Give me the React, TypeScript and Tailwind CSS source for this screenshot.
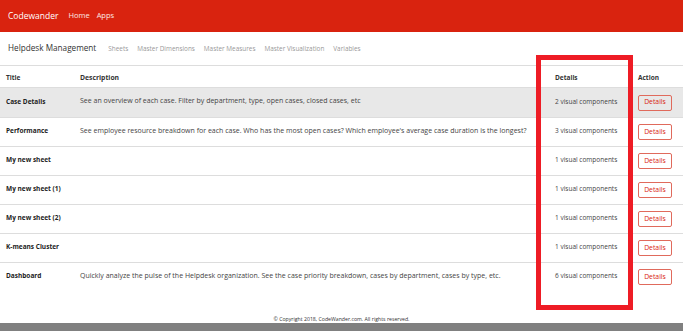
import React from 'react';

const sheets = [
  {
    title: 'Case Details',
    description: 'See an overview of each case. Filter by department, type, open cases, closed cases, etc',
    count: 2,
  },
  {
    title: 'Performance',
    description:
      "See employee resource breakdown for each case. Who has the most open cases? Which employee's average case duration is the longest?",
    count: 3,
  },
  { title: 'My new sheet', description: '', count: 1 },
  { title: 'My new sheet (1)', description: '', count: 1 },
  { title: 'My new sheet (2)', description: '', count: 1 },
  { title: 'K-means Cluster', description: '', count: 1 },
  {
    title: 'Dashboard',
    description:
      'Quickly analyze the pulse of the Helpdesk organization. See the case priority breakdown, cases by department, cases by type, etc.',
    count: 6,
  },
];

const cols = 'grid grid-cols-[74px_475px_83px_1fr] px-[6px]';

export default function App() {
  return (
    <div className="relative w-[683px] h-[331px] overflow-hidden bg-white font-['Open_Sans',sans-serif] text-[#333]">
      {/* Navbar */}
      <div className="h-[32px] bg-[#d9230f] flex items-center px-[8px] gap-[10px]">
        <span className="text-white text-[8.5px] leading-none">Codewander</span>
        <div className="flex gap-[7px] text-[7.5px] text-white/90">
          <span>Home</span>
          <span>Apps</span>
        </div>
      </div>

      {/* Sub nav */}
      <div className="h-[34px] border-b border-[#ddd] flex items-center px-[8px]">
        <span className="text-[8.2px] text-[#333] mr-[12px]">Helpdesk Management</span>
        <div className="flex gap-[9px] text-[6.4px] text-[#999]">
          <span>Sheets</span>
          <span>Master Dimensions</span>
          <span>Master Measures</span>
          <span>Master Visualization</span>
          <span>Variables</span>
        </div>
      </div>

      {/* Table */}
      <div className="text-[7px]">
        <div className={`${cols} h-[22px] items-end pb-[4px] text-[6.5px] font-bold border-b-[1.5px] border-[#ddd]`}>
          <span>Title</span>
          <span className="text-[6.8px]">Description</span>
          <span>Details</span>
          <span>Action</span>
        </div>
        {sheets.map((s, i) => (
          <div
            key={s.title}
            className={`${cols} h-[29px] items-center ${i > 0 ? 'border-t border-[#ddd]' : ''} ${
              i === 0 ? 'bg-[#e8e8e8]' : ''
            }`}
          >
            <span className="font-bold text-[6.5px] text-[#222] relative -top-[1px]">{s.title}</span>
            <span className="text-[#444] relative -top-[1px]">{s.description}</span>
            <span className="text-[#444] text-[6.5px] relative -top-[1px]">{s.count} visual components</span>
            <span>
              <button className="w-[34px] h-[16px] border border-[#e06a5c] rounded-[2px] text-[#d9230f] text-[6.8px] leading-none">
                Details
              </button>
            </span>
          </div>
        ))}
      </div>

      {/* Footer */}
      <div className="absolute left-0 right-0 top-[316px] text-center text-[5.2px] text-[#333]">
        © Copyright 2018, CodeWander.com. All rights reserved.
      </div>
      <div className="absolute left-0 right-0 top-[323px] h-[8px] bg-[#808080]" />

      {/* Annotation box */}
      <div className="absolute left-[536px] top-[55px] w-[97px] h-[255px] border-[5px] border-[#ee1c25]" />
    </div>
  );
}
